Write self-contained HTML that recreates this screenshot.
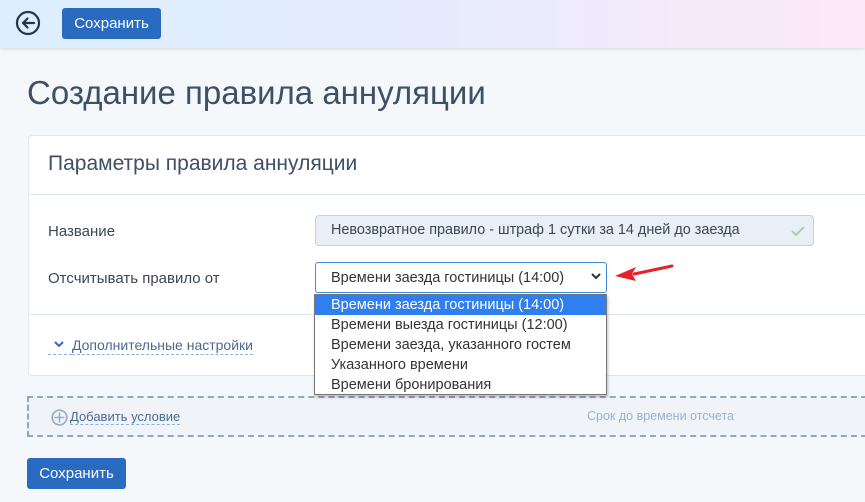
<!DOCTYPE html>
<html><head><meta charset="utf-8"><style>
*{box-sizing:border-box;margin:0;padding:0}
body{width:865px;height:502px;overflow:hidden;background:#f5f8fb;font-family:"Liberation Sans",sans-serif;position:relative;color:#3b4656}
.hdr{position:absolute;left:0;top:0;width:865px;height:48px;background:linear-gradient(90deg,#dcefff 0%,#e6ecfd 50%,#fde8f8 100%);box-shadow:0 1px 4px rgba(0,0,0,.12)}
.btn{position:absolute;background:#2a6bc2;color:#fff;border-radius:3px;font-size:15px;text-align:center}
.t{position:absolute;white-space:nowrap}
</style></head><body>
<div class="hdr"></div>
<svg style="position:absolute;left:15px;top:10px" width="26" height="26" viewBox="0 0 26 26"><circle cx="13" cy="13" r="11" fill="none" stroke="#27344a" stroke-width="2.2"/><path d="M19 13H8M12.5 8.5L8 13l4.5 4.5" fill="none" stroke="#27344a" stroke-width="2.2" stroke-linecap="round" stroke-linejoin="round"/></svg>
<div class="btn" style="left:62px;top:8px;width:99px;height:31px;line-height:31px">Сохранить</div>
<div class="t" style="left:27px;top:74px;font-size:33px;color:#3e4f66">Создание правила аннуляции</div>
<div style="position:absolute;left:28px;top:135px;width:850px;height:241px;background:#fff;border:1px solid #e2e7ee;border-radius:4px"></div>
<div class="t" style="left:48px;top:152px;font-size:21px;color:#3e4f66">Параметры правила аннуляции</div>
<div style="position:absolute;left:29px;top:194px;width:836px;height:1px;background:#e2e8ef"></div>
<div class="t" style="left:48px;top:223px;font-size:15px">Название</div>
<div style="position:absolute;left:315px;top:215px;width:499px;height:31px;background:#e9eff6;border:1px solid #c5d0dc;border-radius:4px"></div>
<div class="t" style="left:331px;top:222px;font-size:14.4px;color:#3b4656">Невозвратное правило - штраф 1 сутки за 14 дней до заезда</div>
<svg style="position:absolute;left:790px;top:224px" width="16" height="14"><path d="M2 7l4 4 8-8" fill="none" stroke="#9ccf9a" stroke-width="1.8"/></svg>
<div class="t" style="left:48px;top:270px;font-size:15px">Отсчитывать правило от</div>
<div style="position:absolute;left:315px;top:262px;width:292px;height:31px;background:#fff;border:1.5px solid #3d8ee0;border-radius:3px"></div>
<div class="t" style="left:331px;top:270px;font-size:14.5px;color:#333">Времени заезда гостиницы (14:00)</div>
<svg style="position:absolute;left:590px;top:272px" width="12" height="10"><path d="M2 2l4 4 4-4" fill="none" stroke="#333" stroke-width="2"/></svg>
<svg style="position:absolute;left:612px;top:262px" width="62" height="20"><path d="M60 4L22 12" stroke="#e8202a" stroke-width="3" stroke-linecap="round"/><path d="M3 14l21-9-4 7 4 7z" fill="#e8202a"/></svg>
<div style="position:absolute;left:29px;top:314px;width:836px;height:1px;background:#e2e8ef"></div>
<svg style="position:absolute;left:53px;top:340px" width="12" height="10"><path d="M2 2l4 4 4-4" fill="none" stroke="#2f6db8" stroke-width="2"/></svg>
<div class="t" style="left:72px;top:337px;font-size:14px;color:#4a6a90;border-bottom:1px dashed #8ab2dd;padding-bottom:1px">Дополнительные настройки</div>
<div style="position:absolute;left:48px;top:354px;width:24px;border-bottom:1px dashed #8ab2dd"></div>
<div style="position:absolute;left:27px;top:396px;width:850px;height:41px;border:2px dashed #94a6ba;background:#f0f4f9"></div>
<svg style="position:absolute;left:51px;top:409px" width="17" height="17"><circle cx="8.5" cy="8.5" r="7.3" fill="none" stroke="#9aa9bb" stroke-width="1.6"/><path d="M8.5 3.5v10M3.5 8.5h10" stroke="#9aa9bb" stroke-width="1.6"/></svg>
<div class="t" style="left:70px;top:409px;font-size:13px;color:#4a6a90;border-bottom:1px dashed #8ab2dd">Добавить условие</div>
<div class="t" style="left:587px;top:409px;font-size:12.5px;color:#9bb0cc">Срок до времени отсчета</div>
<div class="btn" style="left:27px;top:458px;width:99px;height:31px;line-height:31px">Сохранить</div>
<div style="position:absolute;left:314px;top:294px;width:293px;height:101px;background:#fff;border:1px solid #777;box-shadow:1px 2px 3px rgba(0,0,0,.25);font-size:14.5px;color:#333">
<div style="height:20px;line-height:20px;padding-left:16px;background:#2f7ff0;color:#fff">Времени заезда гостиницы (14:00)</div>
<div style="height:20px;line-height:20px;padding-left:16px">Времени выезда гостиницы (12:00)</div>
<div style="height:20px;line-height:20px;padding-left:16px">Времени заезда, указанного гостем</div>
<div style="height:20px;line-height:20px;padding-left:16px">Указанного времени</div>
<div style="height:20px;line-height:20px;padding-left:16px">Времени бронирования</div>
</div>
</body></html>
